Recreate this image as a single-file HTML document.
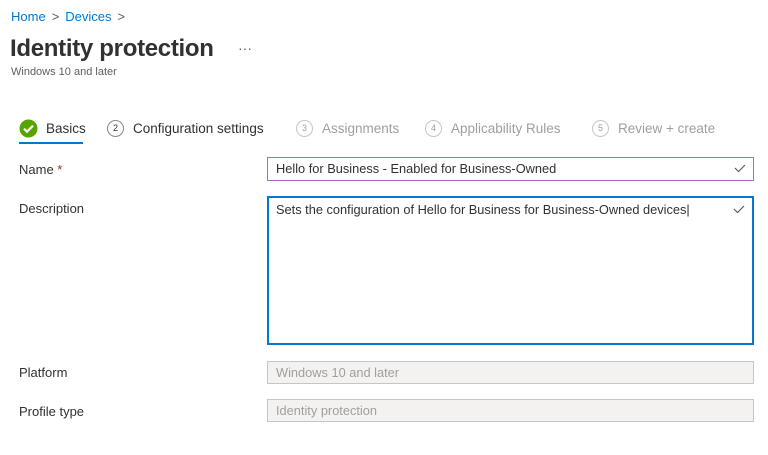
<!DOCTYPE html><html><head><style>
body{margin:0;width:768px;height:455px;background:#fff;font-family:"Liberation Sans",sans-serif;color:#323130;position:relative;overflow:hidden}
.a{position:absolute;white-space:nowrap}
.bc{font-size:13px;color:#0078d4;top:9px;left:11px}
.bc span{color:#605e5c;margin:0 6px}
.t{top:35px;left:10px;font-size:24px;font-weight:bold;color:#323130;letter-spacing:-0.3px}
.sub{top:66px;left:11px;font-size:11px;color:#605e5c}
.tab{top:118px;height:20px;font-size:13.5px;display:flex;align-items:center}
.circ{display:inline-block;width:15px;height:15px;border:1px solid #8a8886;border-radius:50%;font-size:9px;text-align:center;line-height:15px;margin-right:9px}
.lbl{left:19px;font-size:13px}
.in{position:absolute;left:267px;width:487px;box-sizing:border-box;font-size:12.8px;padding-left:8px}
.ck{position:absolute;right:6px;top:3px}
</style></head><body>
<div class="a bc">Home<span>&gt;</span>Devices<span>&gt;</span></div>
<div class="a t">Identity protection</div>
<div class="a" style="top:40px;left:238px;color:#605e5c;font-size:14px">···</div>
<div class="a sub">Windows 10 and later</div>
<div class="a tab" style="left:19px"><svg width="19" height="19" viewBox="0 0 19 19" style="margin-right:8px"><circle cx="9.5" cy="9.5" r="9" fill="#57a300"/><path d="M5 9.7l3 3 6-6" stroke="#fff" stroke-width="2.2" fill="none"/></svg>Basics</div>
<div class="a" style="left:19px;top:142px;width:64px;height:2px;background:#0078d4"></div>
<div class="a tab" style="left:107px;color:#323130"><span class="circ">2</span>Configuration settings</div>
<div class="a tab" style="left:296px;color:#a19f9d"><span class="circ" style="border-color:#c8c6c4">3</span>Assignments</div>
<div class="a tab" style="left:425px;color:#a19f9d"><span class="circ" style="border-color:#c8c6c4">4</span>Applicability Rules</div>
<div class="a tab" style="left:592px;color:#a19f9d"><span class="circ" style="border-color:#c8c6c4">5</span>Review + create</div>
<div class="a lbl" style="top:162px">Name <span style="color:#a4262c">*</span></div>
<div class="in" style="top:157px;height:24px;border:1px solid #a86bc0;line-height:22px">Hello for Business - Enabled for Business-Owned<svg class="ck" width="14" height="14"><path d="M2 7l3.5 3.5L12 4" stroke="#605e5c" fill="none" stroke-width="1.2"/></svg></div>
<div class="a lbl" style="top:201px">Description</div>
<div class="in" style="top:196px;height:149px;border:2px solid #0078d4;padding-left:7px;line-height:22px;padding-top:1px">Sets the configuration of Hello for Business for Business-Owned devices|<svg class="ck" width="14" height="14" style="top:4px"><path d="M2 7l3.5 3.5L12 4" stroke="#605e5c" fill="none" stroke-width="1.2"/></svg></div>
<div class="a lbl" style="top:365px">Platform</div>
<div class="in" style="top:361px;height:23px;border:1px solid #c8c6c4;background:#f3f2f1;color:#a19f9d;line-height:21px">Windows 10 and later</div>
<div class="a lbl" style="top:404px">Profile type</div>
<div class="in" style="top:399px;height:23px;border:1px solid #c8c6c4;background:#f3f2f1;color:#a19f9d;line-height:21px">Identity protection</div>
</body></html>
